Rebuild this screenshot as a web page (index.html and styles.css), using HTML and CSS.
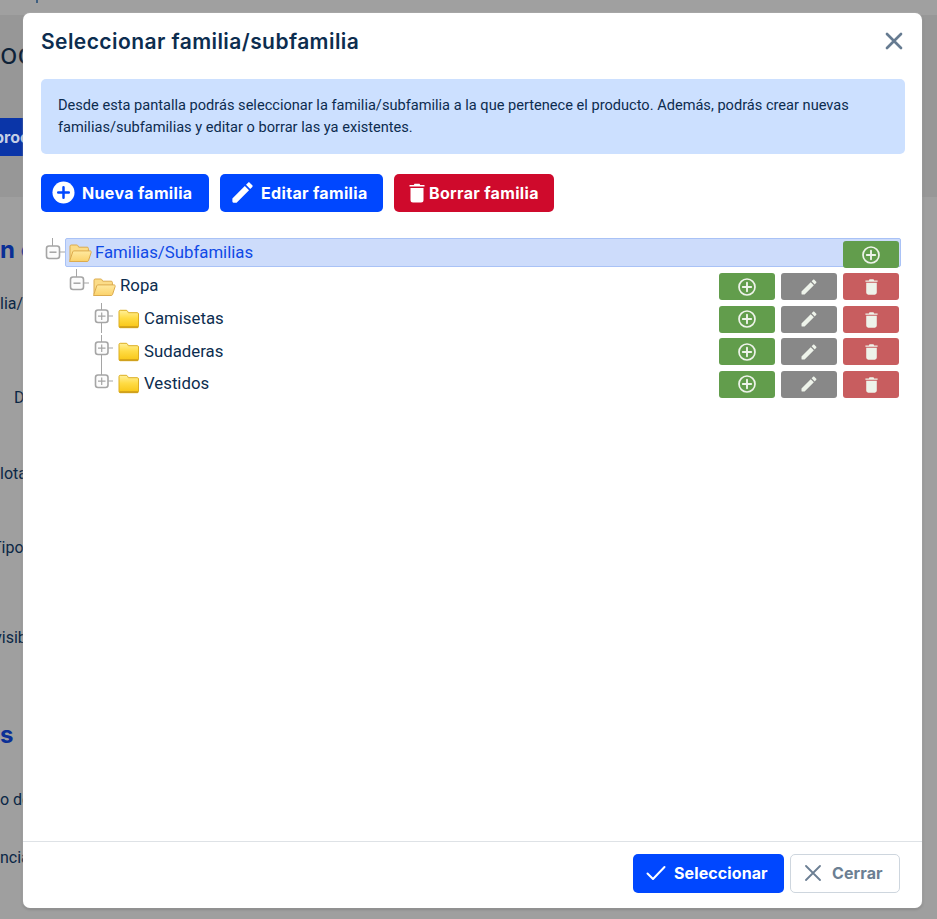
FILE: index.html
```html
<!DOCTYPE html>
<html lang="es">
<head>
<meta charset="utf-8">
<title>Seleccionar familia/subfamilia</title>
<link rel="stylesheet" href="styles.css">
</head>
<body>
<svg class="defs" width="0" height="0" aria-hidden="true">
  <defs>
    <linearGradient id="closedFill" x1="0" y1="0" x2="0" y2="1">
      <stop offset="0" stop-color="#fff09a"/>
      <stop offset="0.45" stop-color="#ffdc45"/>
      <stop offset="1" stop-color="#f8c514"/>
    </linearGradient>
    <linearGradient id="openFill" x1="0" y1="0" x2="0" y2="1">
      <stop offset="0" stop-color="#ffe9a0"/>
      <stop offset="1" stop-color="#fbd26a"/>
    </linearGradient>
    <symbol id="folder-closed" viewBox="0 0 24 20">
      <path d="M1 4V2.500c0-.7.5-1.200 1.200-1.200h6c.6 0 1 .3 1.300.8l.8 1.600h9c.7 0 1.200.5 1.200 1.200v12.600c0 .7-.5 1.200-1.200 1.200H2.200c-.7 0-1.200-.5-1.200-1.200z" fill="url(#closedFill)" stroke="#dcae22"/>
      <path d="M1.500 18h18.500" stroke="#c9981a" stroke-width="1.400"/>
    </symbol>
    <symbol id="folder-open" viewBox="0 0 24 20">
      <path d="M2 17V3.200c0-.7.5-1.200 1.200-1.200h5.600c.5 0 .9.300 1.100.7l.8 1.500h8.500c.7 0 1.200.5 1.200 1.200V8" fill="#fbdc88" stroke="#dcab4e"/>
      <path d="M1.500 18.500 4.800 8.700c.2-.5.600-.8 1.100-.8h16.200c.8 0 1.300.7 1.100 1.400l-2.700 8.300c-.2.500-.6.900-1.200.9z" fill="url(#openFill)" stroke="#dcab4e"/>
    </symbol>
    <symbol id="exp-minus" viewBox="0 0 24 33">
      <path d="M11.500 2v8M18.500 16H25" stroke="#a5a5a5" fill="none"/>
      <rect x="5.500" y="10" width="13" height="12.500" rx="2.500" fill="#fcfcfc" stroke="#a5a5a5" stroke-width="1.600"/>
      <path d="M8.500 16.200h7" stroke="#a5a5a5" stroke-width="1.500"/>
    </symbol>
    <symbol id="exp-plus" viewBox="0 0 24 33">
      <path d="M12.500 3v30M19 16h7" stroke="#a5a5a5" fill="none"/>
      <rect x="6.500" y="10" width="12.500" height="12.500" rx="2.500" fill="#fcfcfc" stroke="#a5a5a5" stroke-width="1.600"/>
      <path d="M9 16.200h7.500M12.700 12.500v7.500" stroke="#a5a5a5" stroke-width="1.200"/>
    </symbol>
    <symbol id="exp-plus-last" viewBox="0 0 24 33">
      <path d="M12.500 0v10M19 16h7" stroke="#a5a5a5" fill="none"/>
      <rect x="6.500" y="10" width="12.500" height="12.500" rx="2.500" fill="#fcfcfc" stroke="#a5a5a5" stroke-width="1.600"/>
      <path d="M9 16.200h7.500M12.700 12.500v7.500" stroke="#a5a5a5" stroke-width="1.200"/>
    </symbol>
    <symbol id="i-plus" viewBox="0 0 20 20">
      <circle cx="10" cy="10" r="8" fill="none" stroke="currentColor" stroke-width="1.700"/>
      <path d="M10 5.800v8.400M5.800 10h8.400" stroke="currentColor" stroke-width="1.900" stroke-linecap="round"/>
    </symbol>
    <symbol id="i-pencil" viewBox="0 0 24 24">
      <path fill="currentColor" d="M20.710 7.040c.39-.39.39-1.040 0-1.410l-2.340-2.340c-.37-.39-1.020-.39-1.410 0l-1.840 1.830 3.750 3.750zM3 17.250V20a1 1 0 0 0 1 1h2.750L17.810 9.930l-3.750-3.750z"/>
    </symbol>
    <symbol id="i-trash" viewBox="0 0 16 20">
      <path fill="currentColor" d="M1.500 5.500h13v12a2.500 2.500 0 0 1-2.500 2.500H4a2.500 2.500 0 0 1-2.500-2.500zM.500 2.500h4.300l.7-1.300h5l.7 1.300h4.300v1.600H.500z"/>
    </symbol>
  </defs>
</svg>

<div class="page">
  <div class="topbar"><span class="topbar-mark"></span></div>
  <div class="band">
    <div class="page-title">oc</div>
    <div class="page-btn">proc</div>
  </div>
  <div class="page-content">
    <div class="sec sec-a">n c</div>
    <div class="lab lab-1">lia/</div>
    <div class="lab lab-2">D</div>
    <div class="lab lab-3">lota</div>
    <div class="lab lab-4">Tipo</div>
    <div class="lab lab-5">visib</div>
    <div class="sec sec-b">s</div>
    <div class="lab lab-6">o de</div>
    <div class="lab lab-7">ncia</div>
  </div>
</div>

<div class="modal" role="dialog" aria-label="Seleccionar familia/subfamilia">
  <header class="modal-head">
    <h2 class="modal-title">Seleccionar familia/subfamilia</h2>
    <svg class="close-x" viewBox="0 0 18 18" aria-label="Cerrar"><path d="M2 2l14 14M16 2 2 16" stroke="currentColor" stroke-width="2.700" stroke-linecap="round" fill="none"/></svg>
  </header>

  <div class="modal-body">
    <p class="alert">Desde esta pantalla podrás seleccionar la familia/subfamilia a la que pertenece el producto. Además, podrás crear nuevas familias/subfamilias y editar o borrar las ya existentes.</p>

    <div class="toolbar">
      <button class="btn btn-blue btn-new">
        <svg class="ic-solid" viewBox="0 0 24 24"><circle cx="12" cy="12" r="11.500" fill="#fff"/><path d="M12 6.500v11M6.500 12h11" stroke="#0047ff" stroke-width="2.600" stroke-linecap="round"/></svg>
        Nueva familia
      </button>
      <button class="btn btn-blue btn-edit">
        <svg class="ic-pen"><use href="#i-pencil"/></svg>
        Editar familia
      </button>
      <button class="btn btn-red btn-del">
        <svg class="ic-bin"><use href="#i-trash"/></svg>
        Borrar familia
      </button>
    </div>

    <div class="tree">
      <div class="row row-root">
        <svg class="exp"><use href="#exp-minus"/></svg>
        <div class="node node-selected">
          <svg class="folder"><use href="#folder-open"/></svg>
          <span class="label label-selected">Familias/Subfamilias</span>
          <div class="actions">
            <span class="act act-add"><svg class="ai"><use href="#i-plus"/></svg></span>
          </div>
        </div>
      </div>

      <div class="row lvl-1">
        <svg class="exp"><use href="#exp-minus"/></svg>
        <div class="node">
          <svg class="folder"><use href="#folder-open"/></svg>
          <span class="label">Ropa</span>
          <div class="actions">
            <span class="act act-add"><svg class="ai"><use href="#i-plus"/></svg></span>
            <span class="act act-edit"><svg class="ai"><use href="#i-pencil"/></svg></span>
            <span class="act act-del"><svg class="ai-bin"><use href="#i-trash"/></svg></span>
          </div>
        </div>
      </div>

      <div class="row lvl-2">
        <svg class="exp"><use href="#exp-plus"/></svg>
        <div class="node">
          <svg class="folder folder-c"><use href="#folder-closed"/></svg>
          <span class="label">Camisetas</span>
          <div class="actions">
            <span class="act act-add"><svg class="ai"><use href="#i-plus"/></svg></span>
            <span class="act act-edit"><svg class="ai"><use href="#i-pencil"/></svg></span>
            <span class="act act-del"><svg class="ai-bin"><use href="#i-trash"/></svg></span>
          </div>
        </div>
      </div>

      <div class="row lvl-2">
        <svg class="exp"><use href="#exp-plus"/></svg>
        <div class="node">
          <svg class="folder folder-c"><use href="#folder-closed"/></svg>
          <span class="label">Sudaderas</span>
          <div class="actions">
            <span class="act act-add"><svg class="ai"><use href="#i-plus"/></svg></span>
            <span class="act act-edit"><svg class="ai"><use href="#i-pencil"/></svg></span>
            <span class="act act-del"><svg class="ai-bin"><use href="#i-trash"/></svg></span>
          </div>
        </div>
      </div>

      <div class="row lvl-2">
        <svg class="exp"><use href="#exp-plus-last"/></svg>
        <div class="node">
          <svg class="folder folder-c"><use href="#folder-closed"/></svg>
          <span class="label">Vestidos</span>
          <div class="actions">
            <span class="act act-add"><svg class="ai"><use href="#i-plus"/></svg></span>
            <span class="act act-edit"><svg class="ai"><use href="#i-pencil"/></svg></span>
            <span class="act act-del"><svg class="ai-bin"><use href="#i-trash"/></svg></span>
          </div>
        </div>
      </div>
    </div>
  </div>

  <footer class="modal-foot">
    <button class="btn btn-blue btn-select">
      <svg class="ic-check" viewBox="0 0 20 16"><path d="M1.500 8.500 7 14 18.500 2" fill="none" stroke="currentColor" stroke-width="2" stroke-linecap="round" stroke-linejoin="round"/></svg>
      Seleccionar
    </button>
    <button class="btn btn-close">
      <svg class="ic-x" viewBox="0 0 16 16"><path d="M1 1l14 14M15 1 1 15" fill="none" stroke="currentColor" stroke-width="1.800" stroke-linecap="round"/></svg>
      Cerrar
    </button>
  </footer>
</div>
</body>
</html>
```
FILE: styles.css
```css
* { box-sizing: border-box; }

html, body {
  margin: 0;
  height: 100%;
}

body {
  position: relative;
  height: 919px;
  overflow: hidden;
  background: #9f9f9f;
  font-family: Roboto, "Liberation Sans", sans-serif;
  color: #0c2d4f;
}

.defs { display: block; height: 0; }

/* Dimmed page behind the dialog */
.page {
  height: 919px;
  background: #9f9f9f;
  color: #0a2746;
  overflow: hidden;
}

.topbar {
  height: 15px;
  padding-left: 36px;
  background: #a0a0a0;
}

.topbar-mark {
  display: block;
  width: 2px;
  height: 3px;
  background: #3f5f80;
}

.band {
  height: 182px;
  background: #979797;
  padding-top: 20px;
}

.page-title {
  font-family: "Open Sans", sans-serif;
  font-size: 29px;
  line-height: 36px;
  color: #0e2238;
}

.page-btn {
  width: 40px;
  height: 38px;
  margin-top: 47px;
  background: #0a35a8;
  color: #c4cfe6;
  font-family: Inter, sans-serif;
  font-weight: 700;
  font-size: 16px;
  line-height: 38px;
  text-indent: -6px;
  white-space: nowrap;
  overflow: hidden;
}

.sec {
  font-family: Inter, sans-serif;
  font-weight: 700;
  font-size: 24px;
  line-height: 30px;
  color: #0a2f96;
}

.lab {
  font-size: 16px;
  line-height: 20px;
  white-space: nowrap;
  color: #0a2746;
}

.sec-a { margin-top: 38px; }
.lab-1 { margin-top: 29px; }
.lab-2 { margin-top: 74px; padding-left: 14px; }
.lab-3 { margin-top: 56px; }
.lab-4 { margin-top: 54px; text-indent: -8px; }
.lab-5 { margin-top: 70px; text-indent: -6px; }
.sec-b { margin-top: 72px; }
.lab-6 { margin-top: 40px; }
.lab-7 { margin-top: 38px; }

/* Dialog */
.modal {
  position: absolute;
  left: 23px;
  top: 13px;
  width: 899px;
  height: 895px;
  display: flex;
  flex-direction: column;
  background: #fff;
  border-radius: 7px;
  box-shadow: 0 0 2px rgba(255, 255, 255, .5), 0 1px 3px rgba(0, 0, 0, .3);
}

.modal-head {
  height: 56px;
  padding: 2px 19px 0 18px;
  display: flex;
  align-items: center;
  justify-content: space-between;
}

.modal-title {
  margin: 0;
  font-family: Inter, sans-serif;
  font-weight: 600;
  font-size: 21px;
  line-height: 28px;
  color: #0c2d4f;
  letter-spacing: 0.43px;
}

.close-x {
  width: 18px;
  height: 18px;
  margin-top: -2px;
  color: #667b91;
}

.modal-body {
  flex: 1;
  padding: 10px 17px 0 18px;
}

.alert {
  margin: 0;
  height: 75px;
  padding: 15px 17px;
  background: #cce0ff;
  border-radius: 5px;
  font-size: 14.600px;
  line-height: 22px;
  color: #0d2c4f;
}

.toolbar {
  display: flex;
  gap: 11px;
  margin-top: 20px;
}

.btn {
  display: inline-flex;
  align-items: center;
  height: 38px;
  padding: 0 0 1px;
  border: 0;
  border-radius: 5px;
  font-family: Inter, sans-serif;
  font-weight: 700;
  font-size: 16px;
  letter-spacing: 0.33px;
  color: #fff;
}

.btn-blue { background: #0047ff; }
.btn-red { background: #cf0a2c; }

.btn-new { width: 168px; padding-left: 11px; gap: 7px; }
.btn-edit { width: 163px; padding-left: 9px; gap: 5px; }
.btn-del { width: 160px; padding-left: 15px; gap: 4px; }

.ic-solid { width: 23px; height: 23px; }
.ic-pen { width: 27px; height: 27px; }
.ic-bin { width: 16px; height: 21px; }

/* Tree */
.tree {
  margin-top: 26px;
  width: 860px;
}

.row {
  display: flex;
  height: 32.670px;
  align-items: flex-start;
}

.row-root { height: 35px; }
.lvl-1 { padding-left: 24px; }
.lvl-2 { padding-left: 48px; }

.exp {
  flex: none;
  width: 24px;
  height: 33px;
  margin-top: -6px;
}

.row-root .exp { margin-top: -2px; }

.node {
  flex: 1;
  height: 27px;
  display: flex;
  align-items: center;
  padding: 0 2px 0 3px;
  gap: 3px;
}

.node-selected {
  height: 29px;
  background: #cddcfb;
  border: 1px solid #a9c2f6;
  border-radius: 2px;
  padding: 0 1px 0 2px;
}

.folder {
  flex: none;
  width: 24px;
  height: 20px;
}

.folder-c { margin: 0 -1px 0 2px; }

.label {
  font-size: 16.800px;
  line-height: 24px;
  padding-bottom: 2.500px;
  color: #0c2d4f;
}

.lvl-1 .label { margin-left: 1px; }
.label-selected { color: #0f49e6; padding-bottom: 0.800px; }

.actions {
  margin-left: auto;
  display: flex;
  gap: 6px;
}

.node-selected .actions {
  align-self: flex-start;
  margin-top: 2px;
}

.act {
  width: 56px;
  height: 27px;
  display: flex;
  align-items: center;
  justify-content: center;
  border-radius: 3px;
  color: #eef3ea;
}

.act-add { background: #629d4c; }
.act-edit { background: #888888; }
.act-del { background: #c85d5f; }

.ai { width: 20px; height: 20px; }
.ai-bin { width: 13px; height: 17px; }

/* Footer */
.modal-foot {
  height: 67px;
  border-top: 1px solid #dee2e6;
  display: flex;
  justify-content: flex-end;
  gap: 6px;
  padding: 12px 22px 0 0;
}

.btn-select {
  width: 151px;
  height: 39px;
  padding-left: 13px;
  gap: 8px;
  letter-spacing: 0.1px;
}

.btn-close {
  width: 110px;
  height: 39px;
  padding-left: 14px;
  gap: 11px;
  background: #fff;
  border: 1px solid #ced6de;
  color: #6c7f93;
  letter-spacing: 0.1px;
}

.ic-check { width: 20px; height: 16px; }
.ic-x { width: 16px; height: 16px; }
```
